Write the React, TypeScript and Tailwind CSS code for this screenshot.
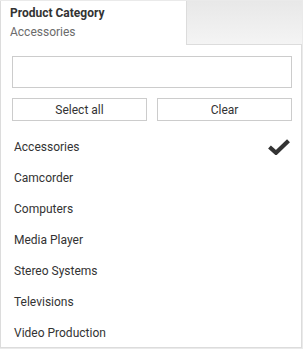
const items = [
  "Accessories",
  "Camcorder",
  "Computers",
  "Media Player",
  "Stereo Systems",
  "Televisions",
  "Video Production",
];

function Check() {
  return (
    <svg width="22" height="16" viewBox="0 0 22 16" className="block">
      <path d="M1.5 8 L8 13.8 L20.5 1.8" fill="none" stroke="#333" strokeWidth="4.2" />
    </svg>
  );
}

export default function App() {
  const selected = "Accessories";

  return (
    <div
      className="w-[303px] h-[349px] bg-[#eaeaea] pt-px pr-px pb-px text-[#333]"
      style={{ fontFamily: "Roboto, 'Liberation Sans', sans-serif" }}
    >
      <div className="flex h-[44px]">
        <div className="w-[187px] bg-white border-l border-r border-[#dcdcdc] pl-[9px] pt-[4px]">
          <div className="text-[12px] font-bold leading-[16px] text-[#333]">Product Category</div>
          <div className="text-[12px] leading-[16px] text-[#6b6b6b] mt-[3px]">Accessories</div>
        </div>
        <div className="flex-1 bg-gradient-to-b from-[#e8e8e8] to-[#f4f4f4] border-b border-[#dcdcdc]" />
      </div>
      <div className="h-[303px] bg-white border-l border-r border-b border-[#dcdcdc] pl-[11px] pr-[9px] pt-[11px]">
        <input className="block w-full h-[32px] border border-[#cccccc] outline-none px-2 text-[12px]" />
        <div className="flex gap-[10px] mt-[10px]">
          <button className="flex-1 h-[23px] border border-[#cccccc] bg-white text-[12px] leading-none text-[#333]">
            Select all
          </button>
          <button className="flex-1 h-[23px] border border-[#cccccc] bg-white text-[12px] leading-none text-[#333]">
            Clear
          </button>
        </div>
        <ul className="mt-[10px]">
          {items.map((item) => (
            <li key={item} className="flex items-center justify-between h-[31px] pl-[2px] pr-[2px] text-[12px] text-[#333]">
              <span>{item}</span>
              {item === selected && <Check />}
            </li>
          ))}
        </ul>
      </div>
    </div>
  );
}
